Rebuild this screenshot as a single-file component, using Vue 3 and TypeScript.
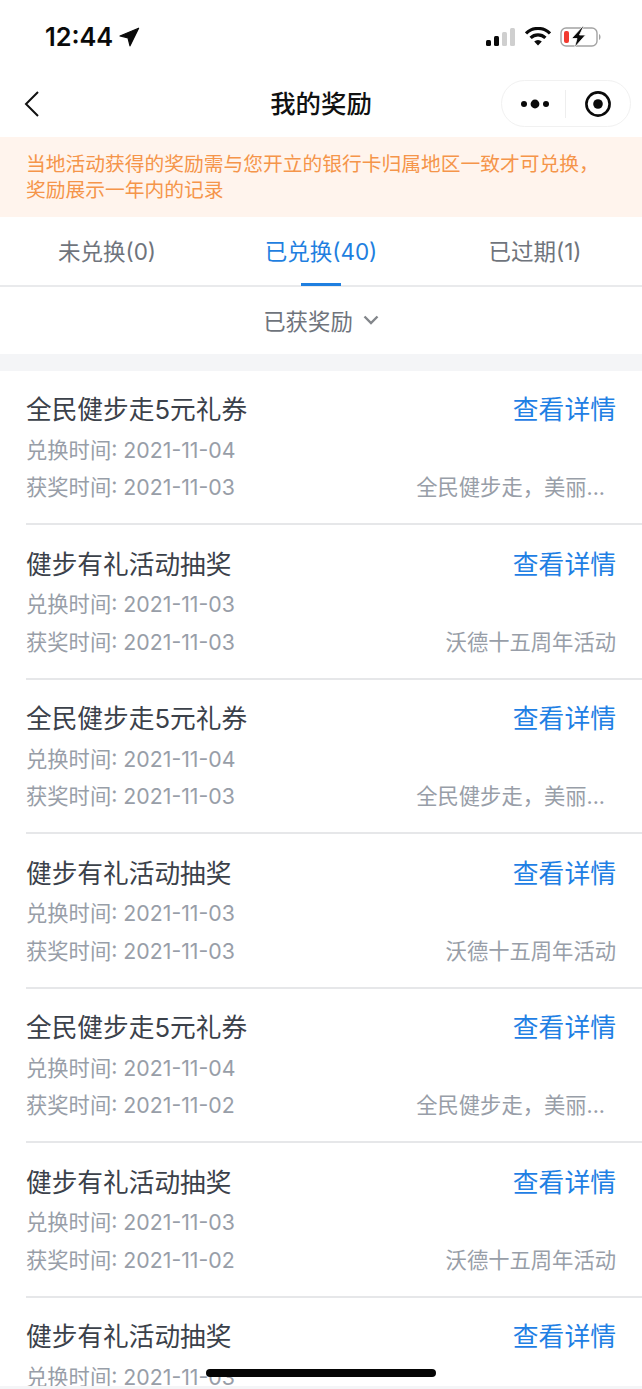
<script setup lang="ts">
interface Reward {
  title: string
  redeemed: string
  won: string
  source: string
}

const tabs = [
  { label: '未兑换(0)', active: false },
  { label: '已兑换(40)', active: true },
  { label: '已过期(1)', active: false },
]

const walk = '全民健步走5元礼券'
const lottery = '健步有礼活动抽奖'
const walkSource = '全民健步走，美丽...'
const lotterySource = '沃德十五周年活动'

const rewards: Reward[] = [
  { title: walk, redeemed: '2021-11-04', won: '2021-11-03', source: walkSource },
  { title: lottery, redeemed: '2021-11-03', won: '2021-11-03', source: lotterySource },
  { title: walk, redeemed: '2021-11-04', won: '2021-11-03', source: walkSource },
  { title: lottery, redeemed: '2021-11-03', won: '2021-11-03', source: lotterySource },
  { title: walk, redeemed: '2021-11-04', won: '2021-11-02', source: walkSource },
  { title: lottery, redeemed: '2021-11-03', won: '2021-11-02', source: lotterySource },
  { title: lottery, redeemed: '2021-11-03', won: '2021-11-02', source: lotterySource },
]
</script>

<template>
  <div class="page">
    <header class="status">
      <div class="status-left">
        <span class="time">12:44</span>
        <svg class="arrow" width="21" height="20" viewBox="0 0 21 20">
          <path d="M19.6 1.2 L1 9 L9 10.8 L11 18.8 Z" fill="#0a0a0a" stroke="#0a0a0a" stroke-width="1.2" stroke-linejoin="round" />
        </svg>
      </div>
      <div class="status-right">
        <svg width="30" height="20" viewBox="0 0 30 20">
          <rect x="0" y="13" width="5" height="6" rx="1.5" fill="#0a0a0a" />
          <rect x="8" y="9" width="5" height="10" rx="1.5" fill="#0a0a0a" />
          <rect x="16" y="5" width="5" height="14" rx="1.5" fill="#cfcfcf" />
          <rect x="24" y="1" width="5" height="18" rx="1.5" fill="#cfcfcf" />
        </svg>
        <svg width="26" height="20" viewBox="0 0 26 20">
          <path d="M1 6.4 A17 17 0 0 1 25 6.4" fill="none" stroke="#0a0a0a" stroke-width="3.2" />
          <path d="M5.6 10.8 A10.6 10.6 0 0 1 20.4 10.8" fill="none" stroke="#0a0a0a" stroke-width="3.2" />
          <path d="M9.2 14.6 A5.4 5.4 0 0 1 16.8 14.6 L13 18.6 Z" fill="#0a0a0a" />
        </svg>
        <svg width="42" height="22" viewBox="0 0 42 22">
          <rect x="1" y="2" width="36" height="18" rx="5" fill="none" stroke="#a3a3a3" stroke-width="1.4" />
          <path d="M39 8 C41 9 41 13 39 14 Z" fill="#a3a3a3" />
          <rect x="4" y="5" width="5" height="12" rx="2" fill="#f23a30" />
          <path d="M22.5 0.5 L11.5 12.5 L17 12.5 L14.5 21.5 L25.5 9 L19.5 9 L23.5 0.5 Z" fill="#0a0a0a" stroke="#fff" stroke-width="0.8" />
        </svg>
      </div>
    </header>

    <nav class="navbar">
      <svg class="back" width="16" height="28" viewBox="0 0 16 28">
        <path d="M14 2 L2 14 L14 26" fill="none" stroke="#111" stroke-width="2" />
      </svg>
      <h1 class="nav-title">我的奖励</h1>
      <div class="capsule">
        <svg width="30" height="10" viewBox="0 0 30 10">
          <circle cx="4" cy="5" r="3" fill="#0a0a0a" />
          <circle cx="15" cy="5" r="4.4" fill="#0a0a0a" />
          <circle cx="26" cy="5" r="3" fill="#0a0a0a" />
        </svg>
        <span class="capsule-line"></span>
        <svg width="28" height="28" viewBox="0 0 28 28">
          <circle cx="14" cy="14" r="11.6" fill="none" stroke="#0a0a0a" stroke-width="2.6" />
          <circle cx="14" cy="14" r="4.8" fill="#0a0a0a" />
        </svg>
      </div>
    </nav>

    <p class="notice">当地活动获得的奖励需与您开立的银行卡归属地区一致才可兑换，<br />奖励展示一年内的记录</p>

    <div class="tabs">
      <div v-for="tab in tabs" :key="tab.label" class="tab" :class="{ active: tab.active }">
        {{ tab.label }}
      </div>
    </div>

    <div class="filter">
      <span>已获奖励</span>
      <svg width="16" height="10" viewBox="0 0 16 10">
        <path d="M1.5 1.5 L8 8 L14.5 1.5" fill="none" stroke="#83868b" stroke-width="2.4" />
      </svg>
    </div>

    <div class="gap"></div>

    <main class="list">
      <article v-for="(r, i) in rewards" :key="i" class="item">
        <div class="row top">
          <span class="title">{{ r.title }}</span>
          <span class="link">查看详情</span>
        </div>
        <div class="row sub">
          <span>兑换时间: {{ r.redeemed }}</span>
        </div>
        <div class="row sub">
          <span>获奖时间: {{ r.won }}</span>
          <span class="source" :class="{ clipped: r.source.endsWith('...') }">{{ r.source }}</span>
        </div>
      </article>
    </main>
    <div class="foot"></div>
    <div class="home"></div>
  </div>
</template>

<style>
html, body { margin: 0; background: #fff; }
</style>

<style scoped>
.page {
  position: relative;
  width: 642px;
  height: 1389px;
  overflow: hidden;
  display: flex;
  flex-direction: column;
  background: #fff;
  font-family: Inter, "Noto Sans CJK SC", sans-serif;
}
.status {
  flex: none;
  height: 70px;
  display: flex;
  justify-content: space-between;
  align-items: center;
  padding: 3px 40px 0 45px;
  box-sizing: border-box;
}
.status-left { display: flex; align-items: center; gap: 6px; }
.time { font-size: 25.3px; font-weight: 600; color: #0a0a0a; }
.status-right { display: flex; align-items: center; gap: 9px; }
.navbar {
  position: relative;
  flex: none;
  height: 67px;
  display: flex;
  align-items: center;
  justify-content: center;
  padding-bottom: 3px;
  box-sizing: border-box;
}
.back { position: absolute; left: 24px; top: 20px; }
.nav-title { margin: 0; font-size: 25.4px; font-weight: 500; color: #111; }
.capsule {
  position: absolute;
  right: 11px;
  top: 10px;
  width: 130px;
  height: 47px;
  box-sizing: border-box;
  border: 1px solid #f1f1f1;
  border-radius: 24px;
  display: flex;
  align-items: center;
  padding-left: 18px;
}
.capsule-line { width: 1px; height: 28px; background: #eeeeee; margin: 0 18px 0 15px; }
.notice {
  flex: none;
  margin: 0;
  height: 80px;
  box-sizing: border-box;
  padding: 14px 26px 0;
  background: #fff4ed;
  color: #f5954a;
  font-size: 19.75px;
  line-height: 26px;
}
.tabs {
  flex: none;
  height: 70px;
  box-sizing: border-box;
  display: flex;
  border-bottom: 2px solid #e9eaec;
}
.tab {
  position: relative;
  flex: 1;
  text-align: center;
  font-size: 22.5px;
  line-height: 70px;
  color: #6f747c;
}
.tab.active { color: #1f7fe0; }
.tab.active::after {
  content: "";
  position: absolute;
  left: 50%;
  bottom: -1px;
  width: 40px;
  height: 3px;
  margin-left: -20px;
  background: #1f7fe0;
}
.filter {
  flex: none;
  height: 67px;
  display: flex;
  align-items: center;
  justify-content: center;
  gap: 10px;
  padding-bottom: 1px;
  box-sizing: border-box;
  font-size: 22.4px;
  color: #6f747c;
}
.gap { flex: none; height: 16.5px; background: #f4f5f7; }
.list {
  flex: 1;
  min-height: 0;
  overflow: hidden;
}
.item {
  height: 154.5px;
  box-sizing: border-box;
  margin-left: 26px;
  padding: 15px 26px 0 0;
  border-bottom: 2px solid #e6e7e9;
}
.row { display: flex; justify-content: space-between; align-items: center; }
.top { height: 44px; }
.title { font-size: 25.7px; color: #3b414a; }
.link { font-size: 25.8px; color: #1f80e4; }
.sub { height: 37.5px; font-size: 21.3px; color: #989ea8; }
.source { white-space: nowrap; }
.clipped { padding-right: 11px; }
.foot { flex: none; height: 3px; background: #f4f5f7; }
.home {
  position: absolute;
  left: 206px;
  bottom: 12px;
  width: 230px;
  height: 8px;
  border-radius: 4px;
  background: #050505;
}
</style>
